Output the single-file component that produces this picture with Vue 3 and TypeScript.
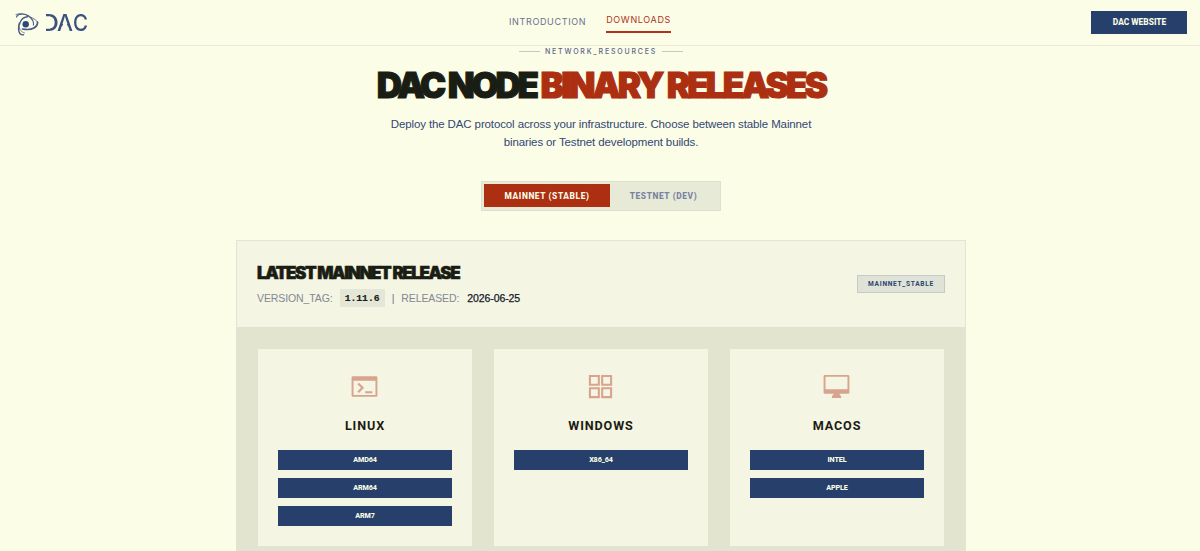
<template>
  <div class="page">
    <header class="topbar">
      <svg class="logo" width="80" height="30" viewBox="0 0 80 30" role="img" aria-label="DAC">
        <defs>
          <!-- opens the left side of the D and drops the bar of the A -->
          <mask id="wordmark-cut">
            <rect width="80" height="30" fill="#fff" />
            <rect x="26" width="6" height="30" fill="#000" />
            <path d="M51 10.500L46.300 24H55.700Z" fill="#000" />
          </mask>
        </defs>
        <g fill="none" stroke="#4a5c86" stroke-linecap="round">
          <path d="M2.500 9C3.500 5.500 10 5 14.500 8C18 10.500 20 13.500 19.500 17" stroke-width="1.200" />
          <path d="M23.500 14C24 18.500 18.500 23 8.500 21" stroke-width="1.700" />
          <path d="M9.500 26.800C4.500 27.500 3 20 6.500 13.500C8 10.500 10.500 9 13.500 8.800" stroke-width="1.400" />
          <path d="M2 6.500C7 4.500 13 6.500 16.500 9C20 11 22.500 12 23.500 14" stroke-width="0.800" />
          <path d="M5 15C4 19.500 6.500 24 10.500 25" stroke-width="0.700" />
        </g>
        <circle cx="11.700" cy="16.300" r="3.200" fill="#2f4778" />
        <g class="wordmark" mask="url(#wordmark-cut)">
          <text x="26" y="23" textLength="19" lengthAdjust="spacingAndGlyphs">D</text>
          <text x="43" y="23" textLength="16" lengthAdjust="spacingAndGlyphs">A</text>
          <text x="59" y="23" textLength="15" lengthAdjust="spacingAndGlyphs">C</text>
        </g>
      </svg>
      <nav class="nav">
        <a
          v-for="link in links"
          :key="link.label"
          class="nav-link"
          :class="{ active: link.active }"
        >{{ link.label }}</a>
      </nav>
      <button class="site-btn">DAC WEBSITE</button>
    </header>

    <main class="content">
      <div class="eyebrow">
        <span class="rule"></span>
        <span class="eyebrow-text">NETWORK_RESOURCES</span>
        <span class="rule"></span>
      </div>
      <h1 class="title">
        DAC NODE <span class="accent">BINARY RELEASES</span>
      </h1>
      <p class="lead">
        Deploy the DAC protocol across your infrastructure. Choose between stable Mainnet<br>
        binaries or Testnet development builds.
      </p>

      <div class="tabs">
        <button
          v-for="tab in tabs"
          :key="tab.id"
          class="tab"
          :class="{ active: tab.id === current }"
          @click="current = tab.id"
        >{{ tab.label }}</button>
      </div>

      <section class="release">
        <div class="release-head">
          <div class="release-info">
            <h2 class="release-title">LATEST MAINNET RELEASE</h2>
            <div class="meta">
              <span class="meta-label">VERSION_TAG:</span>
              <code class="version">1.11.6</code>
              <span class="divider">|</span>
              <span class="meta-label">RELEASED:</span>
              <span class="date">2026-06-25</span>
            </div>
          </div>
          <span class="badge">MAINNET_STABLE</span>
        </div>

        <div class="platforms">
          <article v-for="p in platforms" :key="p.name" class="platform">
            <svg class="icon" width="31" height="31" viewBox="0 0 24 24" fill="currentColor">
              <path :d="p.icon" fill-rule="evenodd" />
            </svg>
            <h3 class="platform-name">{{ p.name }}</h3>
            <div class="builds">
              <a v-for="b in p.builds" :key="b" class="build">{{ b }}</a>
            </div>
          </article>
        </div>
      </section>
    </main>
  </div>
</template>

<script setup lang="ts">
import { ref } from 'vue';

interface Platform {
  name: string;
  icon: string;
  builds: string[];
}

type Network = 'mainnet' | 'testnet';

const current = ref<Network>('mainnet');

const links = [
  { label: 'INTRODUCTION', active: false },
  { label: 'DOWNLOADS', active: true },
];

const tabs: { id: Network; label: string }[] = [
  { id: 'mainnet', label: 'MAINNET (STABLE)' },
  { id: 'testnet', label: 'TESTNET (DEV)' },
];

const platforms: Platform[] = [
  {
    name: 'LINUX',
    icon: 'M2.600 4h18.800l.6.6v14.800l-.6.6H2.600l-.6-.6V4.600zM3.500 7.500v11h17v-11zM7.700 17l-1.200-1.200L9.300 13l-2.800-2.800L7.700 9l4 4zM12.500 15.700h5.500v1.500h-5.500z',
    builds: ['AMD64', 'ARM64', 'ARM7'],
  },
  {
    name: 'WINDOWS',
    icon: 'M3 3h8.500v8.500H3zM4.600 4.600v5.300h5.300V4.600zM12.500 3H21v8.500h-8.500zM14.100 4.600v5.300h5.300V4.600zM3 12.500h8.500V21H3zM4.600 14.100v5.300h5.300v-5.300zM12.500 12.500H21V21h-8.500zM14.100 14.100v5.300h5.300v-5.300z',
    builds: ['X86_64'],
  },
  {
    name: 'MACOS',
    icon: 'M3 3h18a1 1 0 0 1 1 1v12.700a1 1 0 0 1-1 1h-6.900l1.500 2v1.200H8.400v-1.200l1.500-2H3a1 1 0 0 1-1-1V4a1 1 0 0 1 1-1zM3.500 4.500v9.700h17V4.500z',
    builds: ['INTEL', 'APPLE'],
  },
];
</script>

<style>
body {
  background: #fbfde7;
}
</style>

<style scoped>
.page {
  box-sizing: border-box;
  height: 551px;
  overflow: hidden;
  background: #fbfde7;
  color: #1a1d14;
  font-family: 'Liberation Sans', Arial, sans-serif;
}

.page *,
.page *::before {
  box-sizing: border-box;
}

button {
  border: 0;
  cursor: pointer;
}

/* Header */
.topbar {
  display: grid;
  grid-template-columns: 1fr auto 1fr;
  align-items: center;
  height: 46px;
  padding: 0 13px 0 14px;
  border-bottom: 1px solid #e9ebd9;
}

.logo {
  display: block;
  margin-top: 1px;
}

.wordmark {
  fill: #3b5180;
  font-family: Inter, sans-serif;
  font-size: 23px;
  font-weight: 500;
}

.nav {
  display: flex;
  gap: 20px;
  height: 45px;
  padding-right: 21px;
}

.nav-link {
  height: 33px;
  padding-top: 11px;
  color: #69718e;
  font-family: Inter, sans-serif;
  font-size: 9px;
  line-height: 22px;
  letter-spacing: 0.65px;
}

.nav-link.active {
  padding-top: 9px;
  border-bottom: 2px solid #b3301a;
  color: #b3301a;
}

.site-btn {
  justify-self: end;
  width: 96px;
  height: 23px;
  padding: 0 0 0 1px;
  background: #27406b;
  color: #fbfde7;
  font: 800 8.4px/23px Roboto, sans-serif;
}

/* Hero */
.content {
  display: flex;
  flex-direction: column;
  align-items: center;
  padding-left: 2px;
}

.eyebrow {
  display: flex;
  align-items: center;
  gap: 5px;
  height: 11px;
}

.rule {
  width: 21px;
  height: 1px;
  background: #c5c9c2;
}

.eyebrow-text {
  color: #5c6788;
  font-family: Inter, sans-serif;
  font-size: 7px;
  font-weight: 500;
  line-height: 11px;
  letter-spacing: 1.8px;
}

.title {
  margin: 7px 0 0;
  font: 900 35px/42px Inter, sans-serif;
  letter-spacing: -3.2px;
  word-spacing: 1px;
  white-space: nowrap;
  -webkit-text-stroke: 1.1px currentColor;
}

.accent {
  color: #ab2f10;
  letter-spacing: -2.8px;
}

.lead {
  margin: 9px 0 0;
  color: #334773;
  font-size: 11.5px;
  line-height: 18px;
  letter-spacing: -0.12px;
  text-align: center;
}

/* Network switch */
.tabs {
  display: flex;
  width: 240px;
  height: 30px;
  margin-top: 30px;
  padding: 2px 3px 3px 2px;
  border: 1px solid #dfe1d0;
  background: #e8ead8;
}

.tab {
  flex: 1;
  padding: 0;
  background: transparent;
  color: #7983a0;
  font: 800 8.4px/24px Roboto, sans-serif;
  letter-spacing: 0.6px;
}

.tab.active {
  flex: 0 0 126px;
  background: #ab2f10;
  color: #fbfde7;
}

/* Release panel */
.release {
  width: 730px;
  margin-top: 29px;
  border: 1px solid #e3e5d2;
  background: #e2e4cf;
}

.release-head {
  display: flex;
  align-items: center;
  justify-content: space-between;
  height: 86px;
  padding: 0 20px;
  background: #f4f5e2;
}

.release-title {
  margin: 2px 0 0;
  font: 900 17px/20px Inter, sans-serif;
  letter-spacing: -1.4px;
  white-space: nowrap;
  -webkit-text-stroke: 0.6px currentColor;
}

.meta {
  display: flex;
  align-items: center;
  height: 18px;
  margin-top: 6px;
  font-size: 10.5px;
  letter-spacing: -0.1px;
}

.meta-label {
  color: #838895;
}

.version {
  width: 45px;
  height: 18px;
  margin: 0 7px;
  background: #e4e6d7;
  font: 700 9.7px/19px 'Liberation Mono', monospace;
  letter-spacing: 0;
  text-align: center;
  -webkit-text-stroke: 0.2px currentColor;
}

.divider {
  margin-right: 7px;
  color: #6e7385;
}

.date {
  margin-left: 8px;
  color: #14192b;
  -webkit-text-stroke: 0.25px currentColor;
}

.badge {
  width: 88px;
  height: 18px;
  border: 1px solid #c6ccc5;
  background: #dfe3d7;
  color: #2e4270;
  font: 700 6.6px/16px Roboto, sans-serif;
  letter-spacing: 0.7px;
  text-align: center;
}

/* Platform cards */
.platforms {
  display: grid;
  grid-template-columns: repeat(3, 1fr);
  gap: 22px;
  padding: 22px 21px;
}

.platform {
  display: flex;
  flex-direction: column;
  align-items: center;
  height: 197px;
  padding: 22px 20px 0;
  background: #f4f5e2;
}

.icon {
  margin-right: 1px;
  color: #d8a48f;
}

.platform-name {
  margin: 15px 0 0;
  font: 700 12.6px/18px Roboto, sans-serif;
  letter-spacing: 0.9px;
}

.builds {
  display: flex;
  flex-direction: column;
  gap: 8px;
  width: 100%;
  margin-top: 15px;
}

.build {
  height: 20px;
  background: #27406b;
  color: #fbfde7;
  font: 800 7.2px/20px Roboto, sans-serif;
  letter-spacing: -0.1px;
  text-align: center;
}
</style>
